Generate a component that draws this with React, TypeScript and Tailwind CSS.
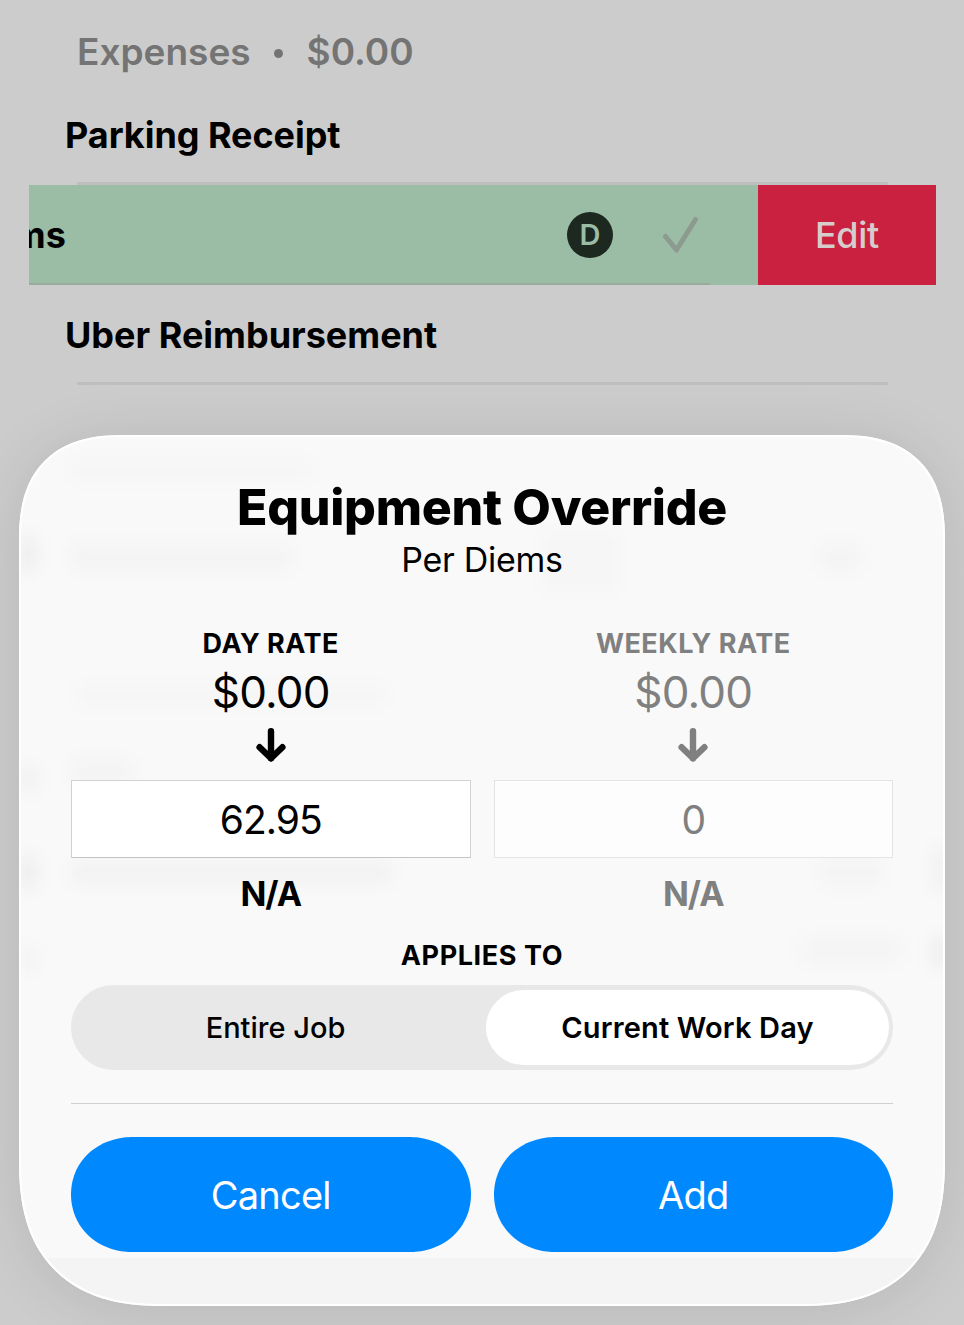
import { clsx } from "clsx";

type RateColumnProps = {
  label: string;
  rate: string;
  value: string;
  muted?: boolean;
};

const DownArrow = () => (
  <svg
    viewBox="0 0 30 34"
    className="h-[34px] w-[30px]"
    fill="none"
    stroke="currentColor"
    strokeWidth="6.4"
    strokeLinecap="round"
    strokeLinejoin="round"
  >
    <path d="M15 3.2v27" />
    <path d="M3.6 19.2 15 30.3 26.4 19.2" />
  </svg>
);

const RateColumn = ({ label, rate, value, muted }: RateColumnProps) => (
  <div
    className={clsx(
      "flex flex-1 flex-col items-center",
      muted ? "text-[#808080]" : "text-black"
    )}
  >
    <span className="text-[27px] leading-[34px] font-bold tracking-[0.5px]">
      {label}
    </span>
    <span className="mt-[5px] text-[44px] leading-[52px] tracking-[-0.8px]">
      {rate}
    </span>
    <div className="mt-[10px]">
      <DownArrow />
    </div>
    <div
      className={clsx(
        "mt-[18px] flex h-[78px] w-full items-center justify-center border text-[39px] tracking-[-1px]",
        muted
          ? "border-[#e4e4e4] bg-[#fdfdfd]"
          : "border-[#d2d2d2] border-b-[#c4c4c4] bg-white"
      )}
    >
      <span className="mt-[3px]">{value}</span>
    </div>
    <span className="mt-[15px] text-[34px] leading-[42px] font-bold tracking-[-1px]">
      N/A
    </span>
  </div>
);

// Content of the list below, showing faintly through the glass
const smudges = [
  "left-[50px] top-[20px] h-[26px] w-[240px] bg-black/1",
  "left-[50px] top-[105px] h-[30px] w-[220px] bg-black/2",
  "left-[520px] top-[95px] h-[60px] w-[80px] bg-black/1",
  "left-[800px] top-[105px] h-[30px] w-[40px] bg-black/2",
  "left-[55px] top-[245px] h-[26px] w-[310px] bg-black/1",
  "left-[50px] top-[320px] h-[30px] w-[60px] bg-black/2",
  "left-[50px] top-[425px] h-[22px] w-[320px] bg-black/3",
  "left-[800px] top-[420px] h-[30px] w-[60px] bg-black/2",
  "left-[780px] top-[500px] h-[26px] w-[100px] bg-black/2",
  "left-[0px] top-[100px] h-[34px] w-[14px] bg-black/6",
  "left-[0px] top-[330px] h-[24px] w-[14px] bg-black/5",
  "left-[0px] top-[418px] h-[34px] w-[14px] bg-black/6",
  "left-[0px] top-[510px] h-[24px] w-[14px] bg-black/3",
  "left-[912px] top-[410px] h-[44px] w-[14px] bg-black/4",
  "left-[912px] top-[500px] h-[30px] w-[14px] bg-black/6",
];

const SwipedRow = () => (
  <div className="mx-[29px] flex h-[100px] w-[907px] overflow-hidden">
    <div className="flex h-full w-[729px] flex-col bg-[#9bbda5]">
      <div className="flex flex-1 items-center pt-[2px]">
        <span className="ml-[-141px] w-[180px] shrink-0 whitespace-nowrap text-[36px] font-bold">
          Per Diems
        </span>
        <span className="ml-[499px] flex size-[46px] shrink-0 items-center justify-center rounded-full bg-[#1c2820] text-[29px] font-semibold text-[#9bbda5]">
          D
        </span>
        <svg
          viewBox="0 0 38 38"
          className="ml-[49px] size-[38px] shrink-0"
          fill="none"
          stroke="#8c9a8f"
          strokeWidth="5"
          strokeLinecap="round"
          strokeLinejoin="round"
        >
          <path d="M3.5 20.5 14.5 34 33.5 3.5" />
        </svg>
      </div>
      <div className="h-[2px] w-[681px] bg-[#99ab9d]" />
    </div>
    <button className="h-full w-[178px] bg-[#cb2141] text-[36px] font-medium tracking-[-0.3px] text-[#d5cdcb]">
      Edit
    </button>
  </div>
);

const App = () => {
  return (
    <main className="h-[1325px] w-[964px] overflow-hidden bg-[#cccccc] font-['Inter','Liberation_Sans',sans-serif] text-black">
      {/* Expenses */}
      <section className="flex flex-col">
        <h2 className="mt-[28px] ml-[77px] flex h-[48px] items-center text-[37px] font-semibold text-[#747474]">
          <span>Expenses</span>
          <span className="mt-[3px] mr-[24px] ml-[23px] size-[9px] rounded-full bg-[#747474]" />
          <span>$0.00</span>
        </h2>
        <div className="mt-[8px] flex h-[101px] flex-col">
          <span className="ml-[65px] flex flex-1 items-center pt-[3px] text-[36px] font-bold tracking-[-0.05px]">
            Parking Receipt
          </span>
          <div className="mx-[77px] h-[3px] w-[811px] bg-[#bfbfbf]" />
        </div>
        <SwipedRow />
        <div className="flex h-[100px] flex-col">
          <span className="ml-[65px] flex flex-1 items-center pt-[2px] text-[36px] font-bold">
            Uber Reimbursement
          </span>
          <div className="mx-[77px] h-[3px] w-[811px] bg-[#bfbfbf]" />
        </div>
      </section>

      {/* Override dialog */}
      <section className="relative mt-[50px] ml-[19px] flex h-[871px] w-[926px] flex-col items-center overflow-visible rounded-t-[105px] rounded-b-[146px] bg-[#f9f9f9] px-[52px] shadow-[0_4px_60px_rgba(0,0,0,0.1)] [corner-shape:superellipse(1.3)]">
        <div className="absolute inset-0 overflow-hidden rounded-t-[105px] rounded-b-[146px] border-2 border-white [corner-shape:superellipse(1.3)]">
          {smudges.map((smudge) => (
            <div key={smudge} className={clsx("absolute blur-[9px]", smudge)} />
          ))}
          <div className="absolute inset-x-0 bottom-0 h-[46px] bg-[#f4f4f4]" />
        </div>

        <div className="relative flex w-full flex-col items-center">
          <h1 className="mt-[42px] text-[50px] leading-[60px] font-extrabold tracking-[-0.3px] whitespace-nowrap">
            Equipment Override
          </h1>
          <p className="mt-[2px] text-[34px] leading-[42px] tracking-[-0.3px]">
            Per Diems
          </p>

          <div className="mt-[46px] flex w-full gap-[23px]">
            <RateColumn label="DAY RATE" rate="$0.00" value="62.95" />
            <RateColumn label="WEEKLY RATE" rate="$0.00" value="0" muted />
          </div>

          <span className="mt-[24px] text-[27px] leading-[34px] font-bold tracking-[0.6px]">
            APPLIES TO
          </span>
          <div className="mt-[12px] flex h-[85px] w-full rounded-full bg-[#e8e8e9] py-[5px] pr-[4px] text-[29px]">
            <button className="flex-1 pr-[6px] font-medium">Entire Job</button>
            <button className="w-[403px] rounded-full bg-white font-semibold tracking-[0.15px]">
              Current Work Day
            </button>
          </div>

          <div className="mt-[33px] h-px w-full bg-[#d0d0d0]" />

          <div className="mt-[33px] flex h-[115px] w-full gap-[23px] text-[38px] tracking-[-0.8px] text-white">
            <button className="flex-1 rounded-[62px/57.5px] bg-[#0088ff] pt-px [corner-shape:superellipse(1.05)]">
              Cancel
            </button>
            <button className="flex-1 rounded-[62px/57.5px] bg-[#0088ff] pt-px [corner-shape:superellipse(1.05)]">
              Add
            </button>
          </div>
        </div>
      </section>
    </main>
  );
};

export default App;
